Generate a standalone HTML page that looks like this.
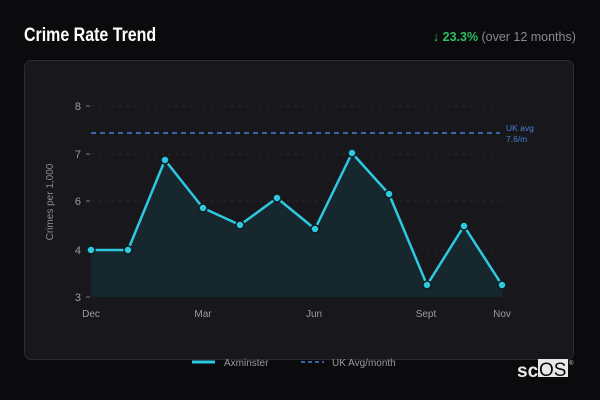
<!DOCTYPE html>
<html><head><style>
body{margin:0;width:600px;height:400px;background:#0b0b0e;font-family:"Liberation Sans",sans-serif;overflow:hidden;position:relative}
.t{position:absolute;left:24px;top:25px;color:#fff;font-weight:bold;font-size:19px;transform:scaleX(0.84);transform-origin:left top}
.r{position:absolute;right:24px;top:29px;font-size:13px;color:#8a8a90;transform:scaleX(0.96);transform-origin:right top}
.r b{color:#2fbf5f}
.card{position:absolute;left:24px;top:60px;width:550px;height:300px;background:#18181c;border:1px solid #2c2c31;border-radius:7px;box-sizing:border-box}
svg{position:absolute;left:0;top:0}
</style></head><body>
<div class="t">Crime Rate Trend</div>
<div class="r"><b>↓ 23.3%</b> (over 12 months)</div>
<div class="card"></div>
<svg width="600" height="400" font-family="Liberation Sans, sans-serif">
<g stroke="#26262b" stroke-dasharray="3 4" stroke-width="1">
<line x1="91" y1="106" x2="502" y2="106"/><line x1="91" y1="154" x2="502" y2="154"/>
<line x1="91" y1="201" x2="502" y2="201"/><line x1="91" y1="250" x2="502" y2="250"/>
</g>
<g stroke="#777" stroke-width="1"><line x1="86" y1="106" x2="90" y2="106"/><line x1="86" y1="154" x2="90" y2="154"/><line x1="86" y1="201" x2="90" y2="201"/><line x1="86" y1="250" x2="90" y2="250"/><line x1="86" y1="297" x2="90" y2="297"/></g>
<g fill="#9a9aa0" font-size="11" text-anchor="end"><text x="81" y="110">8</text><text x="81" y="158">7</text><text x="81" y="205">6</text><text x="81" y="254">4</text><text x="81" y="301">3</text></g>
<text transform="translate(53,202) rotate(-90)" fill="#8a8a90" font-size="10" text-anchor="middle">Crimes per 1,000</text>
<g fill="#9a9aa0" font-size="10" text-anchor="middle"><text x="91" y="317">Dec</text><text x="203" y="317">Mar</text><text x="314" y="317">Jun</text><text x="426" y="317">Sept</text><text x="502" y="317">Nov</text></g>
<line x1="91" y1="133" x2="500" y2="133" stroke="#4a7fd6" stroke-width="1.5" stroke-dasharray="5 4"/>
<text x="506" y="131" fill="#4a7fd6" font-size="8.5">UK avg</text><text x="506" y="142" fill="#4a7fd6" font-size="8.5">7.6/m</text>
<path d="M91,297 L91,250 L128,250 L165,160 L203,208 L240,225 L277,198 L315,229 L352,153 L389,194 L427,285 L464,226 L502,285 L502,297Z" fill="#16282e"/>
<polyline points="91,250 128,250 165,160 203,208 240,225 277,198 315,229 352,153 389,194 427,285 464,226 502,285" fill="none" stroke="#2ec8e0" stroke-width="2.5" stroke-linejoin="round"/>
<g fill="#2ec8e0" stroke="#0e1a1e" stroke-width="1.5">
<circle cx="91" cy="250" r="4"/><circle cx="128" cy="250" r="4"/><circle cx="165" cy="160" r="4"/><circle cx="203" cy="208" r="4"/><circle cx="240" cy="225" r="4"/><circle cx="277" cy="198" r="4"/><circle cx="315" cy="229" r="4"/><circle cx="352" cy="153" r="4"/><circle cx="389" cy="194" r="4"/><circle cx="427" cy="285" r="4"/><circle cx="464" cy="226" r="4"/><circle cx="502" cy="285" r="4"/>
</g>
<line x1="192" y1="362" x2="215" y2="362" stroke="#2ec8e0" stroke-width="3"/>
<text x="224" y="366" fill="#9a9aa0" font-size="10">Axminster</text>
<line x1="301" y1="362" x2="324" y2="362" stroke="#4a7fd6" stroke-width="1.5" stroke-dasharray="4 3"/>
<text x="332" y="366" fill="#9a9aa0" font-size="10">UK Avg/month</text>
<rect x="538" y="359" width="30" height="18" fill="#e8e8e8"/>
<text x="517" y="377" fill="#e8e8e8" font-size="19" font-weight="bold">sc</text>
<text x="539" y="376" fill="#0b0b0e" font-size="19">OS</text>
<text x="569" y="365" fill="#ccc" font-size="6">®</text>
</svg>
</body></html>
